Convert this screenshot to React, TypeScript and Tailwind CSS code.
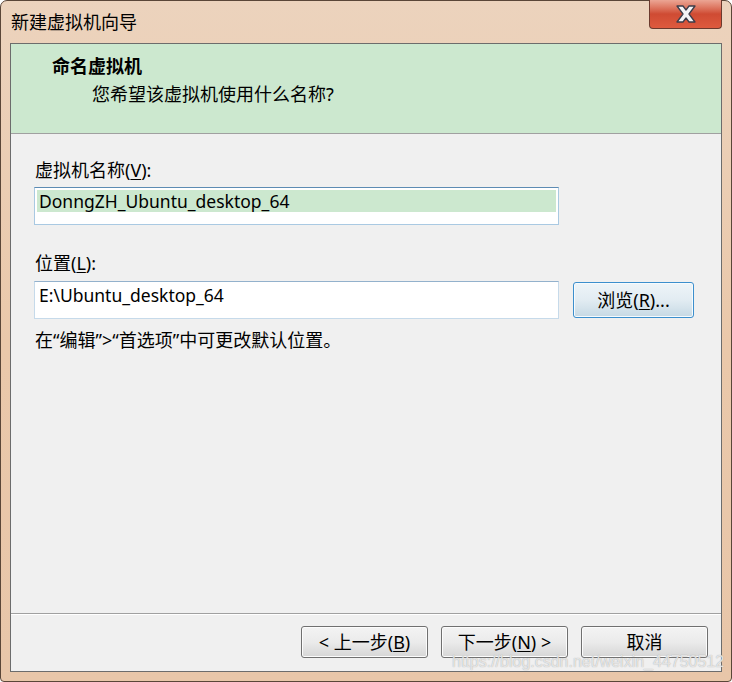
import React from "react";

const font = { fontFamily: '"Noto Sans", "Noto Sans CJK SC", sans-serif' };

function U({ children }: { children: React.ReactNode }) {
  return <span className="underline underline-offset-[2px] decoration-1">{children}</span>;
}

function Btn({ children }: { children: React.ReactNode }) {
  return (
    <div className="w-[127px] h-[32px] rounded-[3px] border border-[#707070] bg-gradient-to-b from-[#f3f3f3] via-[#ebebeb] to-[#d6d6d6] flex items-center justify-center text-[18px] text-black shadow-[inset_0_0_0_1px_#fcfcfc]">
      {children}
    </div>
  );
}

export default function App() {
  return (
    <div className="w-[732px] h-[682px] relative overflow-hidden" style={font}>
      <div className="w-[732px] h-[682px] flex flex-col border border-[#5a4638] rounded-t-[7px] rounded-b-[4px] bg-gradient-to-b from-[#ecd3bd] via-[#eac8aa] to-[#e8c6a9] px-[9px] pb-[9px]">
        {/* title bar */}
        <div className="h-[42px] flex items-start justify-between">
          <div className="pt-[9px] pl-[1px] text-[18px] leading-[24px] text-black">新建虚拟机向导</div>
          <div className="w-[73px] h-[29px] -mt-[1px] rounded-b-[4px] border border-[#6b3a2e] border-t-0 bg-gradient-to-b from-[#eba594] via-[#cf4b33] to-[#de5a3e] flex items-center justify-center">
            <svg width="26" height="20" viewBox="0 0 26 20">
              <path
                d="M4 2 H10 L13 6 L16 2 H22 L16 10 L22 18 H16 L13 14 L10 18 H4 L10 10 Z"
                fill="#f4f4f6"
                stroke="#3d3d4a"
                strokeWidth="1.3"
                strokeLinejoin="round"
              />
            </svg>
          </div>
        </div>
        {/* client */}
        <div className="flex-1 flex flex-col border border-[#6c6c6c] bg-[#f0f0f0]">
          <div className="h-[90px] bg-[#cce8cf] border-b border-[#a0a0a0] pl-[41px] pt-[10px]">
            <div className="text-[18px] leading-[24px] font-bold text-black">命名虚拟机</div>
            <div className="text-[18px] leading-[24px] mt-[4px] pl-[40px] text-black">您希望该虚拟机使用什么名称?</div>
          </div>
          <div className="flex-1 pl-[23px] pt-[24px] text-[18px] text-black">
            <div className="leading-[24px] pl-[1px]">
              虚拟机名称(<U>V</U>):
            </div>
            <div className="mt-[5px] w-[525px] h-[38px] border border-[#a9c9e2] border-t-[#5d8bb3] bg-white p-[2px]">
              <div className="h-[22px] bg-[#cce8cf] pl-[2px] leading-[22px] text-[17.5px]">DonngZH_Ubuntu_desktop_64</div>
            </div>
            <div className="mt-[26px] leading-[24px] pl-[1px]">
              位置(<U>L</U>):
            </div>
            <div className="mt-[6px] flex items-center gap-[14px]">
              <div className="w-[525px] h-[38px] border border-[#c6daea] border-t-[#93b1cc] bg-white p-[2px]">
                <div className="h-[22px] pl-[2px] leading-[22px] text-[17.5px]">E:\Ubuntu_desktop_64</div>
              </div>
              <div className="w-[121px] h-[36px] rounded-[3px] border border-[#3c8fcd] bg-gradient-to-b from-[#eef4f8] via-[#e2ecf2] to-[#c6d9e4] flex items-center justify-center shadow-[inset_0_0_0_1px_#f6fbfe]">
                浏览(<U>R</U>)...
              </div>
            </div>
            <div className="mt-[9px] leading-[24px] pl-[1px]">在“编辑”&gt;“首选项”中可更改默认位置。</div>
          </div>
          <div className="border-t border-[#a0a0a0] shadow-[inset_0_1px_0_#ffffff] h-[58px] flex items-start justify-end gap-[13px] pt-[12px] pr-[13px]">
            <Btn>
              &lt; 上一步(<U>B</U>)
            </Btn>
            <Btn>
              下一步(<U>N</U>) &gt;
            </Btn>
            <Btn>取消</Btn>
          </div>
        </div>
      </div>
      <div
        className="absolute left-[452px] top-[653px] text-[16px] leading-[18px] text-white/70 whitespace-nowrap"
        style={{ fontFamily: '"Liberation Sans", sans-serif', textShadow: "0 0 1px #9a9a9a" }}
      >
        https://blog.csdn.net/weixin_44750512
      </div>
    </div>
  );
}
